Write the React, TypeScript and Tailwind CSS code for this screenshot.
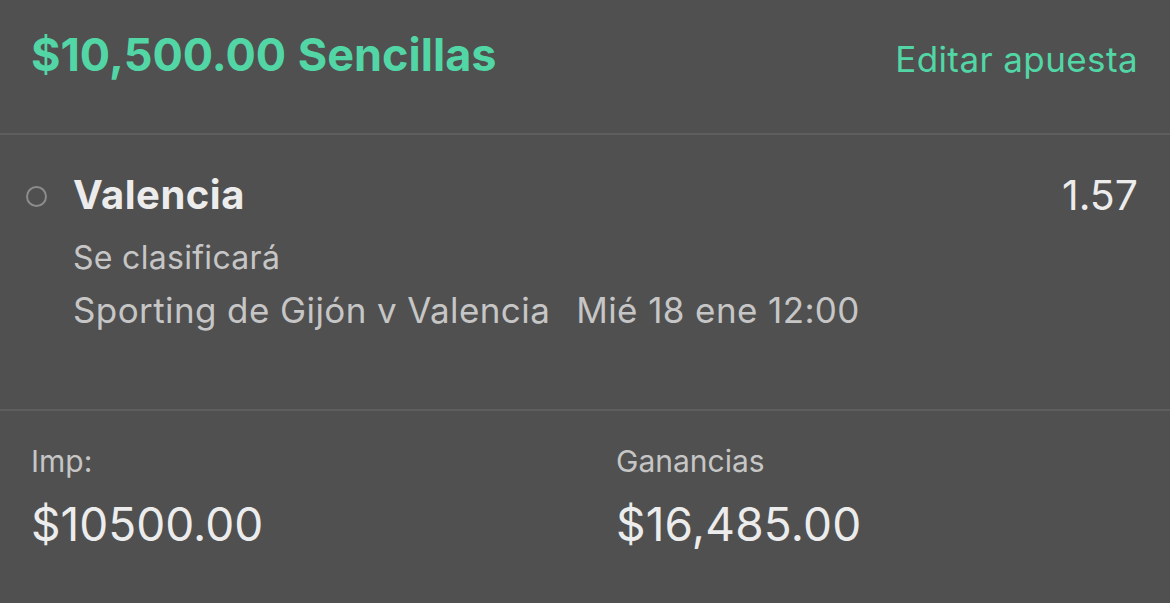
import React from "react";

const BetSummary: React.FC = () => {
  return (
    <div
      className="w-[1170px] h-[603px] bg-[#505050] flex flex-col overflow-hidden"
      style={{ fontFamily: "Inter, 'Noto Sans', sans-serif" }}
    >
      {/* header */}
      <div className="h-[133px] flex items-start justify-between pl-[31px] pr-[32px] pt-[29px]">
        <h1 className="text-[45px] leading-[52px] font-bold text-[#52d6a6] [word-spacing:1px]">
          $10,500.00 Sencillas
        </h1>
        <button className="text-[35px] leading-[52px] mt-[4px] text-[#52d6a6] tracking-[0.4px]">
          Editar apuesta
        </button>
      </div>
      <div className="h-[2px] bg-[#5e5e5e]" />

      {/* selection */}
      <div className="h-[274px] flex pl-[26px] pr-[32px] pt-[38px]">
        <div className="w-[21px] h-[21px] rounded-full border-[2.5px] border-[#8c8c8c] mt-[13px]" />
        <div className="flex-1 ml-[26px]">
          <div className="flex items-center justify-between">
            <span className="text-[40px] leading-[44px] font-bold text-[#ececec] tracking-[0.5px]">
              Valencia
            </span>
            <span className="text-[41px] leading-[44px] text-[#ececec]">1.57</span>
          </div>
          <p className="text-[32px] leading-[38px] mt-[22px] text-[#c6c6c6] tracking-[0.3px]">
            Se clasificará
          </p>
          <p className="text-[35px] leading-[40px] mt-[13px] text-[#c6c6c6] tracking-[0.4px]">
            Sporting de Gijón v Valencia
            <span className="ml-[26px]">Mié 18 ene 12:00</span>
          </p>
        </div>
      </div>
      <div className="h-[2px] bg-[#5e5e5e]" />

      {/* totals */}
      <div className="flex-1 grid grid-cols-[585px_1fr] pl-[31px] pt-[33px]">
        <div>
          <p className="text-[30px] leading-[34px] text-[#c6c6c6]">Imp:</p>
          <p className="text-[46px] leading-[50px] mt-[21px] text-[#ececec]">
            $10500.00
          </p>
        </div>
        <div>
          <p className="text-[30px] leading-[34px] text-[#c6c6c6]">Ganancias</p>
          <p className="text-[46px] leading-[50px] mt-[21px] text-[#ececec] tracking-[0.2px]">
            $16,485.00
          </p>
        </div>
      </div>
    </div>
  );
};

export default function App() {
  return <BetSummary />;
}
